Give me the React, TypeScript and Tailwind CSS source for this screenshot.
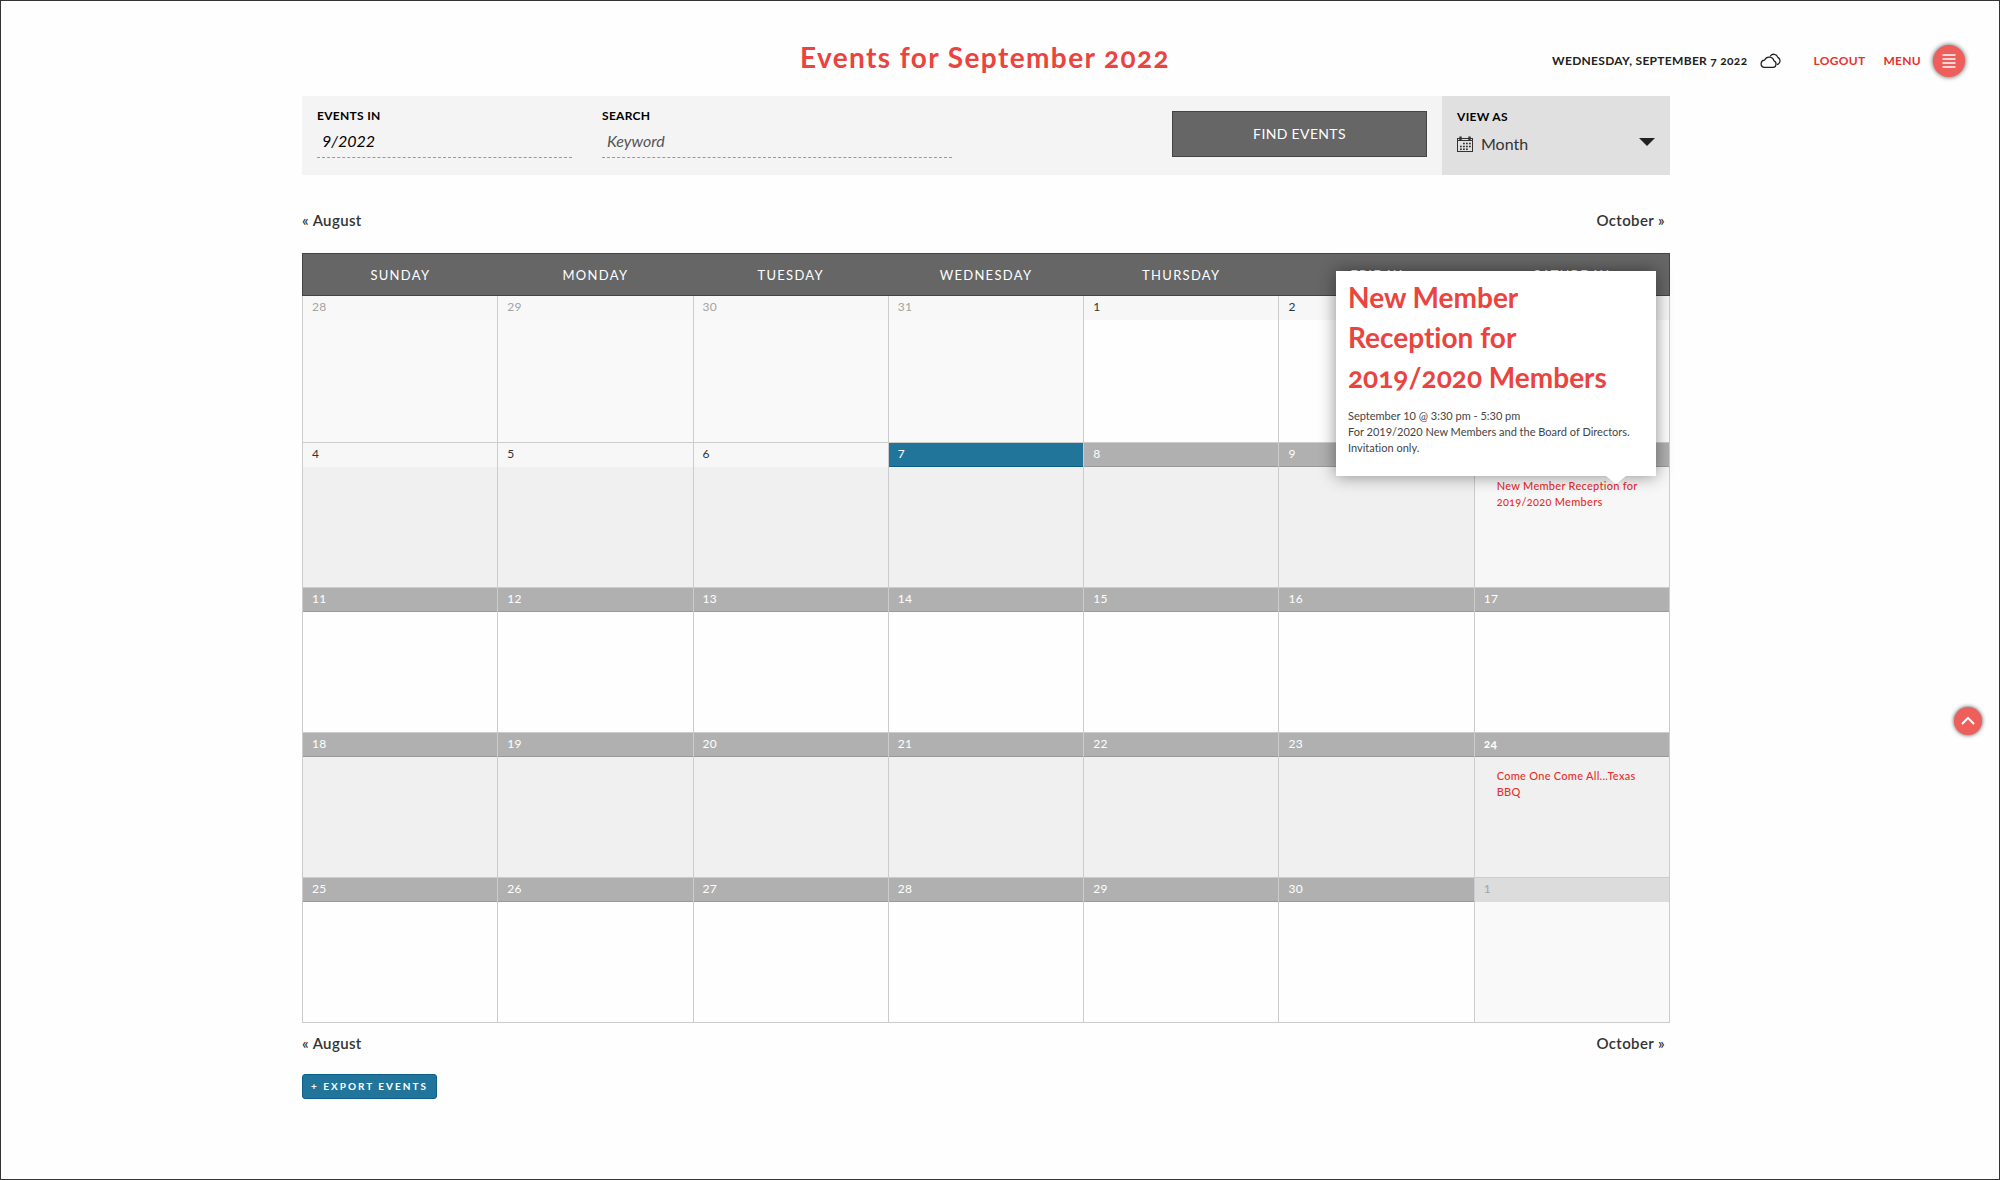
import { useState } from 'react';
import clsx from 'clsx';

type DayStatus = 'other' | 'past' | 'today' | 'future' | 'otherFuture';

interface CalendarEvent {
  title: string;
  when?: string;
  description?: string;
}

interface Day {
  date: number;
  status: DayStatus;
  event?: CalendarEvent;
}

const WEEKDAYS = ['Sunday', 'Monday', 'Tuesday', 'Wednesday', 'Thursday', 'Friday', 'Saturday'];

const EVENTS: Record<number, CalendarEvent> = {
  10: {
    title: 'New Member Reception for 2019/2020 Members',
    when: 'September 10 @ 3:30 pm - 5:30 pm',
    description: 'For 2019/2020 New Members and the Board of Directors. Invitation only.',
  },
  24: { title: 'Come One Come All...Texas BBQ' },
};

const TODAY = 7;

function getStatus(date: number): DayStatus {
  if (date < TODAY) return 'past';
  return date === TODAY ? 'today' : 'future';
}

const DAYS: Day[] = [
  ...[28, 29, 30, 31].map((date) => ({ date, status: 'other' as const })),
  ...Array.from({ length: 30 }, (_, i) => ({ date: i + 1, status: getStatus(i + 1), event: EVENTS[i + 1] })),
  { date: 1, status: 'otherFuture' },
];

const WEEKS = [0, 1, 2, 3, 4].map((w) => DAYS.slice(w * 7, w * 7 + 7));

const STRIP: Record<DayStatus, string> = {
  other: 'bg-[#f8f8f8] text-[#a3a3a3]',
  past: 'bg-[#f7f7f7] text-[#333]',
  today: 'bg-[#21759b] text-white border-b border-[#0b5f88]',
  future: 'bg-[#b0b0b0] text-white border-b border-[#999]',
  otherFuture: 'bg-[#dcdcdc] text-[#a3a3a3]',
};

function CloudIcon() {
  return (
    <svg className="h-4 w-6" viewBox="0 0 24 16" fill="none" stroke="#222" strokeWidth="1.3" strokeLinejoin="round" strokeLinecap="round">
      <path d="M5 14.4 H14 A3.4 3.4 0 0 0 15 7.9 A5 5 0 0 0 5.6 7.1 A3.7 3.7 0 0 0 5 14.4 Z" />
      <path d="M11.4 3 C13.2 0.4 17.6 0.6 18.8 4.4 A3.8 3.8 0 0 1 18.6 11.4" />
    </svg>
  );
}

function CalendarIcon() {
  return (
    <svg className="h-4 w-4" viewBox="0 0 16 16" fill="none" stroke="#333">
      <rect x="0.5" y="2.5" width="15" height="13" />
      <path d="M1 4.5 H15" strokeWidth="1" />
      <path d="M3.5 0.5 V4 M12.5 0.5 V4" strokeWidth="2.4" />
      <path d="M6 7.5 H14 M3 10.5 H14 M3 13.2 H11" strokeWidth="1.6" strokeDasharray="1.8 1.2" />
    </svg>
  );
}

function MonthNav() {
  return (
    <nav className="flex justify-between pr-[5px] text-[15px] leading-5 font-semibold tracking-wide text-[#333]">
      <a href="#august">« August</a>
      <a href="#october">October »</a>
    </nav>
  );
}

function Tooltip({ event }: { event: CalendarEvent }) {
  return (
    <div className="absolute right-[13px] bottom-[111px] z-10 h-[205px] w-80 bg-white px-3 pt-[6px] text-left shadow-[0_0_16px_rgba(0,0,0,0.45)]">
      <h4 className="text-[28px] leading-10 font-bold text-[#ea4440] oldstyle-nums">{event.title}</h4>
      <div className="mt-[11px] text-[11px] leading-4 text-[#444]">
        <p>{event.when}</p>
        <p>{event.description}</p>
      </div>
      <svg className="absolute top-full right-[30px] h-2 w-5" viewBox="0 0 20 8" fill="#fff">
        <path d="M0 0 H20 L10 8 Z" />
      </svg>
    </div>
  );
}

function DayCell({ day, shaded, open }: { day: Day; shaded: boolean; open: boolean }) {
  const other = day.status === 'other' || day.status === 'otherFuture';
  return (
    <td
      className={clsx(
        'relative border border-[#ccc] p-0 align-top',
        open ? 'bg-[#f7f7f7] shadow-[0_0_8px_rgba(0,0,0,0.3)]' : other ? 'bg-[#f9f9f9]' : shaded ? 'bg-[#f0f0f0]' : 'bg-[#fefefe]',
      )}
    >
      <div className={clsx('h-6 px-[9px] pt-[3px] text-[12px] leading-4 tracking-wide', STRIP[day.status], day.event && 'font-bold oldstyle-nums')}>
        {day.date}
      </div>
      {day.event && (
        <a href={`#event-${day.date}`} className="mx-[22px] mt-[11px] block text-[11px] leading-4 font-medium tracking-wide text-[#e5302d] oldstyle-nums">
          {day.event.title}
        </a>
      )}
      {open && day.event && <Tooltip event={day.event} />}
    </td>
  );
}

export default function App() {
  const [month, setMonth] = useState('9/2022');
  const [keyword, setKeyword] = useState('');

  return (
    <div className="relative min-h-screen border border-[#333] bg-[#fefefe] font-['Lato',sans-serif] text-[#222] [font-variant-ligatures:none]">
      <header className="grid h-[95px] grid-cols-[1fr_auto_1fr] items-center pt-6 pr-[30px]">
        <div />
        <h1 className="pb-2 text-[28px] leading-10 font-bold tracking-wider text-[#ea4440] oldstyle-nums">Events for September 2022</h1>
        <div className="flex items-center justify-end pr-1 text-[12px] leading-4 font-bold tracking-wide whitespace-nowrap uppercase oldstyle-nums">
          <span className="mr-3">Wednesday, September 7 2022</span>
          <CloudIcon />
          <a href="#logout" className="ml-[30px] text-[#e8302c]">Logout</a>
          <a href="#menu" className="ml-[18px] text-[#e8302c]">Menu</a>
          <button aria-label="Open menu" className="ml-3 flex h-8 w-8 items-center justify-center rounded-full bg-[#ee5f5b] shadow-[0_0_5px_rgba(0,0,0,0.7)]">
            <svg className="h-4 w-4" viewBox="0 0 16 16" stroke="#fff" strokeWidth="1.5">
              <path d="M1.5 2 H14.5 M1.5 6 H14.5 M1.5 10 H14.5 M1.5 14 H14.5" />
            </svg>
          </button>
        </div>
      </header>

      <main className="mr-[329px] ml-[301px]">
        <form className="flex h-[79px] bg-[#f4f4f4]" onSubmit={(e) => e.preventDefault()}>
          <div className="flex flex-1 gap-[30px] px-[15px] pt-3">
            <label className="w-[255px] text-[12px] leading-4 font-bold tracking-wide text-black">
              EVENTS IN
              <input
                className="block h-[34px] w-full border-b border-dashed border-[#999] px-[5px] pt-1 pb-1 text-[16px] font-normal tracking-normal italic outline-none"
                value={month}
                onChange={(e) => setMonth(e.target.value)}
              />
            </label>
            <label className="w-[350px] text-[12px] leading-4 font-bold tracking-wide text-black">
              SEARCH
              <input
                className="block h-[34px] w-full border-b border-dashed border-[#999] px-[5px] pt-1 pb-1 text-[16px] font-normal tracking-normal italic outline-none placeholder:text-[#555]"
                placeholder="Keyword"
                value={keyword}
                onChange={(e) => setKeyword(e.target.value)}
              />
            </label>
            <button className="mt-[3px] ml-auto h-[46px] w-[255px] border border-[#444] bg-[#666] pb-px text-[14px] leading-5 tracking-wide text-white">
              FIND EVENTS
            </button>
          </div>
          <div className="w-[228px] bg-[#e0e0e0] px-[15px] pt-[13px]">
            <label htmlFor="view" className="block text-[12px] leading-4 font-bold tracking-wide text-black">VIEW AS</label>
            <div className="mt-[7px] flex items-center">
              <CalendarIcon />
              <select id="view" className="ml-2 flex-1 appearance-none text-[16px] leading-6 text-[#333] outline-none">
                <option>Month</option>
                <option>List</option>
                <option>Day</option>
              </select>
              <svg className="-mt-1 h-2 w-4" viewBox="0 0 16 8" fill="#222">
                <path d="M0 0 H16 L8 8 Z" />
              </svg>
            </div>
          </div>
        </form>

        <div className="mt-[35px]">
          <MonthNav />
        </div>

        <table className="mt-[23px] w-full table-fixed border-collapse">
          <thead>
            <tr className="h-[42px]">
              {WEEKDAYS.map((name) => (
                <th key={name} className="border-y border-[#444] bg-[#666] p-0 text-[13px] leading-5 font-normal tracking-widest text-white uppercase first:border-l last:border-r">
                  {name}
                </th>
              ))}
            </tr>
          </thead>
          <tbody>
            {WEEKS.map((week, w) => (
              <tr key={w} className={w === 0 ? 'h-[147px]' : 'h-[145px]'}>
                {week.map((day) => (
                  <DayCell key={`${day.status}-${day.date}`} day={day} shaded={w % 2 === 1} open={day.date === 10} />
                ))}
              </tr>
            ))}
          </tbody>
        </table>

        <div className="mt-[10px]">
          <MonthNav />
        </div>
        <button className="mt-[21px] block h-[25px] rounded-[3px] border border-[#0b5f88] bg-[#21759b] px-2 pb-[2px] text-[10px] leading-4 font-bold tracking-[2px] text-white">
          + EXPORT EVENTS
        </button>
      </main>

      <button aria-label="Back to top" className="fixed top-[707px] right-[18px] flex h-7 w-7 items-center justify-center rounded-full bg-[#ee5f5b] shadow-[0_0_4px_rgba(0,0,0,0.7)]">
        <svg className="h-3 w-4" viewBox="0 0 16 12" fill="none" stroke="#fff" strokeWidth="2">
          <path d="M2 9 L8 3 L14 9" />
        </svg>
      </button>
    </div>
  );
}
